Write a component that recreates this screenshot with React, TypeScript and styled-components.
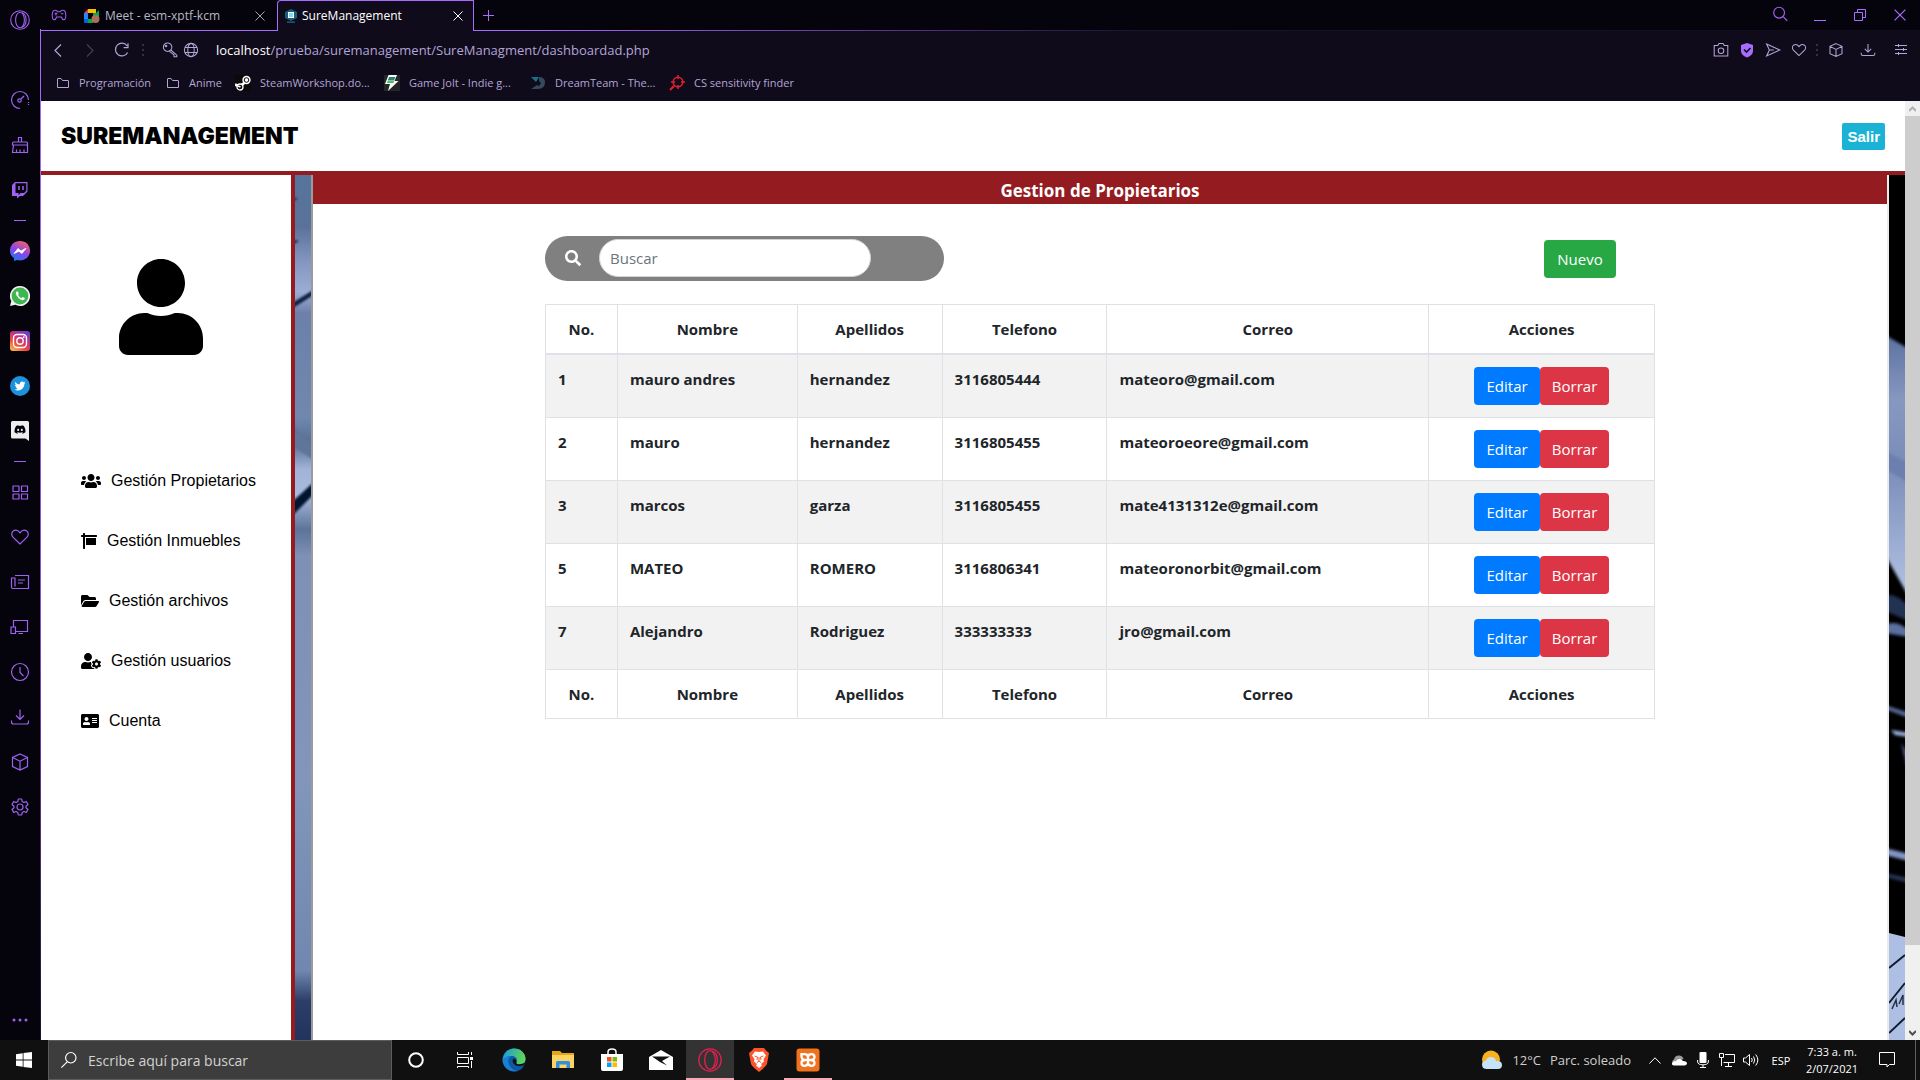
import React from "react";
import styled, { createGlobalStyle } from "styled-components";
import {
  FaUser,
  FaUsers,
  FaSign,
  FaFolderOpen,
  FaUserCog,
  FaAddressCard,
  FaSearch,
  FaTwitter,
  FaDiscord,
} from "react-icons/fa";

const uiFont = `"Open Sans", "Noto Sans", sans-serif`;
const arialFont = `"Liberation Sans", Arial, sans-serif`;
const red = "#941b1f";
const purple = "#9d63f0";
const lilac = "#b3a5d6";

const GlobalStyle = createGlobalStyle`
  *, *::before, *::after { box-sizing: border-box; }
  body { margin: 0; background: #05030c; font-family: ${uiFont}; }
  button, input { font-family: inherit; margin: 0; }
  svg { display: block; flex: none; }
`;

/* ---------- shared ---------- */

const Screen = styled.div`
  display: flex;
  flex-direction: column;
  height: 100vh;
  overflow: hidden;
`;

const IconButton = styled.button<{ $w?: number; $h?: number }>`
  display: flex;
  align-items: center;
  justify-content: center;
  flex: none;
  width: ${(p) => p.$w ?? 32}px;
  height: ${(p) => p.$h ?? 32}px;
  padding: 0;
  border: 0;
  background: none;
  color: inherit;
  font-size: 11px;
`;

type GlyphProps = { size?: number; w?: number; children: React.ReactNode };
const Glyph = ({ size = 20, w = 1.2, children }: GlyphProps) => (
  <svg width={size} height={size} viewBox="0 0 20 20" fill="none" stroke="currentColor" strokeWidth={w} aria-hidden="true">
    {children}
  </svg>
);

const HeartGlyph = () => (
  <path d="M10 17 L3 10.2 C1.2 8.3 1.4 5.4 3.2 4 C5.2 2.6 8 3 10 5.8 C12 3 14.8 2.6 16.8 4 C18.6 5.4 18.8 8.3 17 10.2 Z" />
);
const CubeGlyph = () => <path d="M10 2 L17.5 5.5 V14.5 L10 18 L2.5 14.5 V5.5 Z M2.5 5.5 L10 9.2 L17.5 5.5 M10 9.2 V18" />;
const DownloadGlyph = () => <path d="M10 2.5 V12 M6 8.5 L10 12.5 L14 8.5 M1.5 13.5 V15 Q1.5 17 3.5 17 H16.5 Q18.5 17 18.5 15 V13.5" />;

/* ---------- browser ---------- */

const Browser = styled.div`
  display: flex;
  flex: 1;
  min-height: 0;
`;

const OperaRail = styled.nav`
  display: flex;
  flex-direction: column;
  align-items: center;
  flex: none;
  width: 41px;
  color: ${purple};
  background: #05030c;
  border-right: 1px solid transparent;
  border-image: linear-gradient(#05030c 30px, #a86cff 30px, #8450cf 60%, #1b1230) 1;
`;

const RailGroup = styled.div<{ $top?: boolean }>`
  display: flex;
  flex-direction: column;
  margin-top: ${(p) => (p.$top ? 37 : 0)}px;
`;

const RailRule = styled.hr`
  width: 12px;
  height: 1px;
  margin: 8px 0 7px;
  border: 0;
  background: ${purple};
`;

const RailEnd = styled.div`
  margin-top: auto;
`;

const BrowserMain = styled.div`
  display: flex;
  flex-direction: column;
  flex: 1;
  min-width: 0;
`;

const TabStrip = styled.div`
  display: flex;
  align-items: stretch;
  height: 31px;
  background: linear-gradient(90deg, #a86cff 480px, #1b1230 1100px, #0f0b1a) bottom / 100% 1px no-repeat, #05030c;
  color: ${purple};
`;

const Tab = styled.div<{ $active?: boolean }>`
  display: flex;
  align-items: center;
  width: ${(p) => (p.$active ? 197 : 200)}px;
  padding-left: 7px;
  ${(p) =>
    p.$active &&
    `border: 1px solid #a86cff; border-bottom: 0; border-radius: 4px 0 0 0; background: #0f0b1a;`}
`;

const TabLabel = styled.button<{ $active?: boolean }>`
  display: flex;
  align-items: center;
  gap: 5px;
  flex: 1;
  padding: 0;
  border: 0;
  background: none;
  font-size: 12px;
  line-height: 16px;
  white-space: nowrap;
  color: ${(p) => (p.$active ? "#ffffff" : "#b9b6c4")};
`;

const WindowButtons = styled.div`
  display: flex;
  gap: 8px;
  margin-left: auto;
  margin-right: 4px;
`;

const AddressBar = styled.div`
  display: flex;
  align-items: center;
  height: 38px;
  padding: 0 4px 0 1px;
  background: #0f0b1a;
  color: ${lilac};
`;

const Dots = styled.span`
  width: 2px;
  height: 12px;
  margin: 0 4px;
  background: repeating-linear-gradient(#352f48 0 2px, transparent 2px 5px);
`;

const SiteButtons = styled.div`
  display: flex;
  padding-left: 11px;
`;

const Url = styled.div`
  flex: 1;
  padding-left: 15px;
  font-size: 13px;
  line-height: 20px;
  white-space: nowrap;
  color: ${lilac};
  b {
    font-weight: 400;
    color: #ffffff;
  }
`;

const Bookmarks = styled.nav`
  display: flex;
  align-items: center;
  gap: 12px;
  height: 32px;
  padding: 0 0 5px 15px;
  background: #0f0b1a;
`;

const Bookmark = styled.a<{ $w: number }>`
  display: flex;
  align-items: center;
  gap: 9px;
  width: ${(p) => p.$w}px;
  font-size: 11px;
  line-height: 16px;
  white-space: nowrap;
  text-decoration: none;
  color: ${lilac};
`;

const Dim = styled.span`
  color: #453d5c;
`;

/* ---------- page ---------- */

const Viewport = styled.div`
  display: flex;
  flex: 1;
  min-height: 0;
`;

const Page = styled.div`
  display: flex;
  flex-direction: column;
  flex: 1;
  min-width: 0;
  background: #ffffff;
`;

const PageHeader = styled.header`
  display: flex;
  align-items: center;
  justify-content: space-between;
  height: 74px;
  padding: 0 20px;
  border-bottom: 4px solid ${red};
`;

const Brand = styled.h1`
  margin: 0;
  font: 900 23px/28px Inter, ${arialFont};
  color: #000000;
`;

const Exit = styled.button`
  height: 27px;
  padding: 0 5px;
  border: 0;
  border-radius: 2px;
  background: #1ab3d6;
  color: #ffffff;
  font: 700 15px/27px ${arialFont};
`;

const PageBody = styled.div`
  display: grid;
  grid-template-columns: 254px 16px minmax(0, 1fr) 16px;
  flex: 1;
  min-height: 0;
`;

const Side = styled.aside`
  display: flex;
  flex-direction: column;
  align-items: center;
  padding: 84px 10px 0 0;
  border-right: 4px solid ${red};
  color: #000000;
  overflow: hidden;
`;

const SideNav = styled.nav`
  align-self: stretch;
  display: flex;
  flex-direction: column;
  margin-top: 96px;
  padding-left: 40px;
`;

const SideLink = styled.a`
  display: flex;
  align-items: center;
  gap: 10px;
  height: 60px;
  font: 16px/24px ${arialFont};
  color: #000000;
  text-decoration: none;
  white-space: nowrap;
`;

const Photo = styled.div`
  min-height: 0;
  overflow: hidden;
  svg {
    width: 100%;
    height: 100%;
  }
`;

const Content = styled.main`
  border-left: 2px solid #9b9b9b;
  border-right: 2px solid #ebebeb;
  background: #ffffff;
  color: #212529;
  overflow: hidden;
`;

const Title = styled.h2`
  margin: 0;
  height: 29px;
  background: ${red};
  color: #ffffff;
  font-size: 17px;
  line-height: 31px;
  font-weight: 700;
  text-align: center;
`;

const Container = styled.div`
  max-width: 1110px;
  margin: 32px auto 0;
`;

const Tools = styled.div`
  display: flex;
  justify-content: space-between;
  align-items: center;
  padding-right: 39px;
  margin-bottom: 23px;
`;

const SearchPill = styled.label`
  display: flex;
  align-items: center;
  gap: 18px;
  width: 399px;
  height: 45px;
  padding: 0 0 1px 20px;
  border-radius: 23px;
  background: #808080;
  color: #ffffff;
`;

const SearchInput = styled.input`
  width: 272px;
  height: 38px;
  padding: 0 10px;
  border: 1px solid #ced4da;
  border-radius: 19px;
  background: #ffffff;
  font-size: 15px;
  &::placeholder {
    color: #6c757d;
    opacity: 1;
  }
`;

const Action = styled.button<{ $bg: string; $w: number }>`
  width: ${(p) => p.$w}px;
  height: 38px;
  padding: 0;
  border: 0;
  border-radius: 4px;
  background: ${(p) => p.$bg};
  color: #ffffff;
  font-size: 15px;
  line-height: 24px;
`;

const Table = styled.table`
  width: 100%;
  table-layout: fixed;
  border-collapse: collapse;
  font-size: 15px;
  line-height: 24px;
  th,
  td {
    padding: 12px;
    border: 1px solid #dee2e6;
    font-weight: 700;
    text-align: left;
    vertical-align: top;
  }
  thead th,
  tfoot th,
  td:last-child {
    text-align: center;
  }
  thead th {
    border-bottom-width: 2px;
  }
  tbody tr:nth-child(odd) {
    background: #f2f2f2;
  }
`;

const Pair = styled.div`
  display: flex;
  justify-content: center;
`;

const ScrollTrack = styled.div`
  display: flex;
  flex-direction: column;
  flex: none;
  width: 15px;
  background: #f0f0f0;
  color: #505050;
`;

const ScrollThumb = styled.div`
  flex: 829;
  background: #cdcdcd;
`;

const ScrollRest = styled.div`
  flex: 80;
`;

/* ---------- taskbar ---------- */

const Taskbar = styled.footer`
  display: flex;
  align-items: stretch;
  flex: none;
  height: 40px;
  background: #101010;
  color: #ffffff;
`;

const TaskSearch = styled.label`
  display: flex;
  align-items: center;
  gap: 10px;
  width: 344px;
  padding-left: 11px;
  border: 1px solid #5c5c5c;
  background: #3d3d3d;
  input {
    flex: 1;
    min-width: 0;
    padding: 0;
    border: 0;
    background: none;
    font-size: 14px;
    color: #d2d2d2;
  }
  input::placeholder {
    color: #d2d2d2;
    opacity: 1;
  }
`;

const TaskApps = styled.div`
  display: flex;
  gap: 1px;
`;

const TaskApp = styled.button<{ $active?: boolean; $open?: boolean }>`
  display: flex;
  align-items: center;
  justify-content: center;
  width: 48px;
  padding: 0;
  border: 0;
  background: ${(p) => (p.$active ? "#333333" : "none")};
  color: #ffffff;
  box-shadow: ${(p) => (p.$active || p.$open ? "inset 0 -2px #f7a8b8" : "none")};
`;

const Tray = styled.div`
  display: flex;
  align-items: center;
  margin-left: auto;
  padding-right: 4px;
  font-size: 11px;
  line-height: 17px;
  white-space: nowrap;
`;

const Weather = styled.div`
  display: flex;
  align-items: center;
  gap: 9px;
  margin-right: 12px;
  font-size: 13px;
  color: #cfcfcf;
`;

const Clock = styled.time`
  width: 64px;
  margin-left: 1px;
  text-align: center;
`;

const DesktopEdge = styled.div`
  width: 1px;
  height: 40px;
  margin-left: 5px;
  background: #5f5f5f;
`;

/* ---------- drawings ---------- */

const OperaMark = ({ color, size }: { color: string; size: number }) => (
  <svg width={size} height={size} viewBox="0 0 20 20" fill="none" stroke={color} strokeWidth="1.1" aria-hidden="true">
    <circle cx="10" cy="10" r="9.3" />
    <ellipse cx="10" cy="10" rx="4.4" ry="7.8" />
    <path d="M12 2.6 C17.5 5 17.5 15 12 17.4" />
  </svg>
);

const LeftPhoto = () => (
  <svg viewBox="0 0 16 865" preserveAspectRatio="none" aria-hidden="true">
    <defs>
      <linearGradient id="lp" x1="0" y1="0" x2="0" y2="1">
        <stop offset="0" stopColor="#56749c" />
        <stop offset=".06" stopColor="#5a7299" />
        <stop offset=".1" stopColor="#8496bf" />
        <stop offset=".135" stopColor="#9aadd3" />
        <stop offset=".16" stopColor="#6c80aa" />
        <stop offset=".28" stopColor="#7088ad" />
        <stop offset=".31" stopColor="#566f98" />
        <stop offset=".34" stopColor="#a3b3d8" />
        <stop offset=".37" stopColor="#a9bbe0" />
        <stop offset=".41" stopColor="#5d7399" />
        <stop offset=".44" stopColor="#7d90b5" />
        <stop offset=".7" stopColor="#8196ba" />
        <stop offset=".92" stopColor="#7287af" />
        <stop offset=".955" stopColor="#2a3e68" />
        <stop offset="1" stopColor="#20345c" />
      </linearGradient>
      <filter id="lb" x="-50%" y="-50%" width="200%" height="200%">
        <feGaussianBlur stdDeviation="1.3" />
      </filter>
    </defs>
    <rect width="16" height="865" fill="url(#lp)" />
    <g filter="url(#lb)">
      <path d="M-4 129 L20 114 V119 L-4 134Z" fill="#071a3b" />
      <path d="M-4 250 L20 270 V286 L-4 270Z" fill="#5e7499" />
      <path d="M-4 328 L20 306 V318 L-4 342Z" fill="#06142f" />
      <path d="M-2 65 L4 66 L-2 69Z M-2 23 L3 23 L-2 26Z" fill="#071a3b" />
    </g>
  </svg>
);

const RightPhoto = () => (
  <svg viewBox="0 0 16 865" preserveAspectRatio="none" aria-hidden="true">
    <defs>
      <linearGradient id="rp" x1="0" y1="0" x2="0" y2="1">
        <stop offset="0" stopColor="#5b719f" />
        <stop offset=".25" stopColor="#8798c0" />
        <stop offset=".5" stopColor="#7a8cb7" />
        <stop offset="1" stopColor="#b3c3e6" />
      </linearGradient>
      <filter id="rb" x="-50%" y="-10%" width="200%" height="120%">
        <feGaussianBlur stdDeviation="1.6" />
      </filter>
    </defs>
    <rect width="16" height="865" fill="#000000" />
    <g filter="url(#rb)">
      <path d="M-4 160 L20 174 V422 L-4 380Z" fill="url(#rp)" />
      <path d="M-4 276 L20 288 V308 L-4 294Z" fill="#6c7fae" />
      <path d="M-4 420 Q8 418 20 432 V446 L-4 436Z" fill="#233253" />
      <path d="M-4 450 Q8 444 20 456 V462 L-4 458Z" fill="#5c6fa0" />
      <path d="M-4 530 L20 538 V543 L-4 534Z" fill="#566b9b" />
      <path d="M2 555 L20 558 V562 L6 560Z" fill="#9db3e2" />
      <path d="M12 568 L20 580 V600 Z" fill="#4a5c88" />
      <path d="M-4 673 L20 679 V686 L-4 680Z" fill="#8395c6" />
      <path d="M-4 698 L20 703 V708 L-4 702Z" fill="#263554" />
    </g>
    <path d="M0 758 L16 762 V865 H0Z" fill="#aebfe4" />
    <path d="M0 793 L16 780 M0 828 L16 808 M0 858 L16 843" stroke="#101a30" strokeWidth="2" />
    <path d="M3 834 L7 825 L8 832 M10 829 L14 820 V830" stroke="#26314b" strokeWidth="1.5" fill="none" />
  </svg>
);

const MeetIcon = () => (
  <svg width="16" height="14" viewBox="0 0 16 14" aria-hidden="true">
    <path d="M0 4 L4 0 V4Z" fill="#ea4335" />
    <path d="M4 0 H12 V4 H4Z" fill="#fbbc04" />
    <path d="M0 4 H4 V10 H0Z" fill="#2684fc" />
    <path d="M0 10 H4 V14 H1 Q0 14 0 13Z" fill="#0066da" />
    <path d="M4 10 H9 V14 H4Z M9 4 H12 L15 1 V9 H9Z" fill="#00ac47" />
    <circle cx="11.5" cy="10" r="4" fill="#a9705a" />
  </svg>
);

const SureIcon = () => (
  <svg width="12" height="14" viewBox="0 0 12 14" aria-hidden="true">
    <path d="M6 0 L12 3 V9 L6 12 L0 9 V3Z" fill="#1c5b78" />
    <rect x="3.5" y="3.5" width="5" height="5" fill="#6fe3f5" stroke="#ffffff" />
    <path d="M2 13.2 H10" stroke="#1c5b78" strokeWidth="1.5" />
  </svg>
);

const FolderIcon = () => (
  <svg width="14" height="12" viewBox="0 0 14 12" fill="none" stroke={lilac} aria-hidden="true">
    <path d="M1.5 10.5 V2 Q1.5 1.5 2 1.5 H5 L6.5 3.5 H12 Q12.5 3.5 12.5 4 V10.5Z" />
  </svg>
);

const SteamIcon = () => (
  <svg width="16" height="16" viewBox="0 0 16 16" aria-hidden="true">
    <rect width="16" height="16" fill="#0a0a0a" />
    <path d="M0 9.5 L5 11.5 L11.500 6" fill="none" stroke="#ffffff" strokeWidth="2.800" />
    <circle cx="11.500" cy="5" r="4.200" fill="#ffffff" />
    <circle cx="11.500" cy="5" r="2.300" fill="#ffffff" stroke="#0a0a0a" strokeWidth="1" />
    <circle cx="5" cy="12" r="3" fill="#0a0a0a" stroke="#ffffff" strokeWidth="1.300" />
    <path d="M3 11 L5.500 12" stroke="#ffffff" strokeWidth="1.800" />
  </svg>
);

const JoltIcon = () => (
  <svg width="16" height="16" viewBox="0 0 16 16" aria-hidden="true">
    <rect width="16" height="16" fill="#262626" />
    <path d="M4.500 0 H13 L10.500 6 H14.500 L4 16 L6 9 H1Z" fill="#ffffff" />
    <path d="M5 2 H11.500 L10 5.500 H3.800Z" fill="#2f7f6f" />
    <path d="M3.500 6 H10 L9.500 8 H2.800Z" fill="#45c85a" />
  </svg>
);

const DreamIcon = () => (
  <svg width="16" height="16" viewBox="0 0 16 16" aria-hidden="true">
    <path d="M1 2 H9 L6 7Z" fill="#17718c" />
    <path d="M9 2 Q15 2 15 7.500 Q15 14 8 14 H1 L7 10 L9 11 L11 8 L9 6Z" fill="#34495c" />
  </svg>
);

const AimIcon = () => (
  <svg width="16" height="16" viewBox="0 0 16 16" fill="none" stroke="#e0202e" strokeWidth="1.500" aria-hidden="true">
    <circle cx="9" cy="7" r="4.800" />
    <path d="M9 0 V4 M9 10 V14 M2 7 H6 M12 7 H16" />
    <path d="M5 11 L1 15" strokeWidth="2.200" />
  </svg>
);

const ShieldIcon = () => (
  <svg width="14" height="16" viewBox="0 0 14 16" aria-hidden="true">
    <path d="M7 1 L13 3 V9 Q13 13 7 15.500 Q1 13 1 9 V3Z" fill="#a86cff" />
    <path d="M4 7.500 L6.500 10 L10.500 6" fill="none" stroke="#0f0b1a" strokeWidth="1.600" />
  </svg>
);

const TwitchIcon = () => (
  <svg width="18" height="18" viewBox="0 0 18 18" aria-hidden="true">
    <path d="M1 4 L4 1 H16.500 V10.500 L12 15 H9 L6 17.500 V15 H1Z" fill={purple} />
    <path d="M4.500 2.200 H15.300 V9.800 L13 12 H9.600 L7.500 14 V12 H4.500Z" fill="#05030c" />
    <path d="M8 5 V9 M12 5 V9" stroke={purple} strokeWidth="1.500" />
  </svg>
);

const MessengerIcon = () => (
  <svg width="20" height="20" viewBox="0 0 20 20" aria-hidden="true">
    <defs>
      <linearGradient id="ms" x1=".2" y1="1" x2=".7" y2="0">
        <stop offset="0" stopColor="#1a7cf0" />
        <stop offset=".5" stopColor="#8a44e8" />
        <stop offset="1" stopColor="#f2636b" />
      </linearGradient>
    </defs>
    <path d="M10 0 C16 0 20 4.200 20 9.700 S16 19.400 10 19.400 L7 19 L4 20 V17 C1.300 15.300 0 12.700 0 9.700 C0 4.200 4 0 10 0Z" fill="url(#ms)" />
    <path d="M4 12.500 L8 7.500 L11 10 L16 7.300 L12 12.500 L9 10.300Z" fill="#ffffff" stroke="#ffffff" strokeWidth=".8" strokeLinejoin="round" />
  </svg>
);

const WhatsIcon = () => (
  <svg width="20" height="20" viewBox="0 0 20 20" aria-hidden="true">
    <path d="M10 0 A10 10 0 1 1 5.300 18.800 L0 20 L1.300 15 A10 10 0 0 1 10 0Z" fill="#f2f2f2" />
    <circle cx="10" cy="10" r="8.400" fill="#3fb650" />
    <path d="M6.500 5.500 Q5 7 6.500 9.500 Q9 13.500 12.500 14.300 Q14.800 14 15 12.300 L12.600 11 L11.500 12.200 Q9 11.200 8 8.800 L8.800 7.700 L7.900 5.500Z" fill="#ffffff" />
  </svg>
);

const InstaIcon = () => (
  <svg width="20" height="20" viewBox="0 0 20 20" aria-hidden="true">
    <defs>
      <linearGradient id="ig" x1=".1" y1="1" x2=".8" y2="0">
        <stop offset="0" stopColor="#fdc04f" />
        <stop offset=".35" stopColor="#ee4a3c" />
        <stop offset=".65" stopColor="#c32f8c" />
        <stop offset="1" stopColor="#6a3fc8" />
      </linearGradient>
    </defs>
    <rect width="20" height="20" rx="3" fill="url(#ig)" />
    <rect x="3.500" y="3.500" width="13" height="13" rx="3.500" fill="none" stroke="#ffffff" strokeWidth="1.400" />
    <circle cx="10" cy="10" r="3.200" fill="none" stroke="#ffffff" strokeWidth="1.400" />
    <circle cx="13.800" cy="6.200" r=".9" fill="#ffffff" />
  </svg>
);

const TwitterIcon = () => (
  <svg width="20" height="20" viewBox="0 0 20 20" aria-hidden="true">
    <circle cx="10" cy="10" r="10" fill="#1c92dd" />
    <FaTwitter x="4.500" y="4.500" size="11" color="#ffffff" />
  </svg>
);

const DiscordIcon = () => (
  <svg width="20" height="20" viewBox="0 0 20 20" aria-hidden="true">
    <path d="M2.500 0 H17.500 Q19 0 19 1.500 V20 L15.500 17.500 H2.500 Q1 17.500 1 16 V1.500 Q1 0 2.500 0Z" fill="#ededed" />
    <FaDiscord x="4" y="2.500" size="12" color="#05030c" />
  </svg>
);

const EdgeIcon = () => (
  <svg width="24" height="24" viewBox="0 0 24 24" aria-hidden="true">
    <defs>
      <linearGradient id="eg" x1="0" y1=".3" x2="1" y2=".5">
        <stop offset="0" stopColor="#1d9ae0" />
        <stop offset="1" stopColor="#62d84e" />
      </linearGradient>
    </defs>
    <circle cx="12" cy="12" r="11.500" fill="#0c59a4" />
    <path d="M.8 10.500 C2 4 7 .5 12.500 .5 C19 .5 23.500 5.500 23.500 10.500 C23.500 14.500 20.500 16.500 17.500 16.500 C15 16.500 13.500 15.500 14.500 14 C16 11 13.500 8 9.500 8 C5.500 8 2 10 .8 13Z" fill="url(#eg)" />
    <path d="M9.500 8 C6 9.500 5.500 13.500 7.500 17.500 C9 20.500 12 22.500 15 23 C8 24.500 1 19.500 .6 12.500 C2 9.500 5.500 7.500 9.500 8Z" fill="#1b7fd3" />
    <path d="M12 10.500 Q9.500 12 11.500 15.500 Q14.500 19.500 22 17.300 L23 15 L18 16.300 Q13.500 16.500 14.500 14 Q15 12 12 10.500Z" fill="#101010" />
  </svg>
);

const ExplorerIcon = () => (
  <svg width="22" height="20" viewBox="0 0 22 20" aria-hidden="true">
    <path d="M0 1 H8 L10 3 H22 V18 H0Z" fill="#e5a51d" />
    <path d="M0 5 H22 V18 H0Z" fill="#fcd462" />
    <path d="M4 18 V12.500 Q4 11 5.500 11 H16.500 Q18 11 18 12.500 V18 H14.500 V14.500 H7.500 V18Z" fill="#3390df" />
  </svg>
);

const StoreIcon = () => (
  <svg width="24" height="24" viewBox="0 0 24 24" aria-hidden="true">
    <path d="M8 7 V4 Q8 1 12 1 Q16 1 16 4 V7" fill="none" stroke="#ffffff" strokeWidth="1.500" />
    <path d="M1 6 H23 V21 Q23 23 21 23 H3 Q1 23 1 21Z" fill="#ffffff" />
    <path d="M7 9 H11.500 V13.500 H7Z" fill="#f25022" />
    <path d="M12.500 9 H17 V13.500 H12.500Z" fill="#7fba00" />
    <path d="M7 14.500 H11.500 V19 H7Z" fill="#00a4ef" />
    <path d="M12.500 14.500 H17 V19 H12.500Z" fill="#ffb900" />
  </svg>
);

const MailIcon = () => (
  <svg width="24" height="20" viewBox="0 0 24 20" aria-hidden="true">
    <path d="M0 7 L12 0 L24 7 V20 H0Z" fill="#ffffff" />
    <path d="M3 6.500 H21 L13 11 L18 15.500 L11 12Z" fill="#101010" />
  </svg>
);

const XamppIcon = () => (
  <svg width="24" height="24" viewBox="0 0 24 24" aria-hidden="true">
    <rect x=".5" y=".5" width="23" height="23" rx="3" fill="#f2711c" />
    <path
      d="M5.500 6 V8 Q5.500 12 9.500 12 H14.500 Q18.500 12 18.500 9 Q18.500 6.200 15.500 6.200 Q12 6.200 12 9.500 V14.500 Q12 17.800 8.500 17.800 Q5.500 17.800 5.500 15 Q5.500 12 9.500 12 M14.500 12 Q18.500 12 18.500 15 Q18.500 17.800 15.500 17.800 Q12 17.800 12 14.500 M12 9.500 Q12 6.200 8.500 6.200 H4.300"
      fill="none"
      stroke="#ffffff"
      strokeWidth="2.300"
    />
  </svg>
);

const SunCloudIcon = () => (
  <svg width="22" height="20" viewBox="0 0 22 20" aria-hidden="true">
    <circle cx="10" cy="9.500" r="9" fill="#f8b21f" />
    <path d="M6 19 Q1 19 1 14.500 Q1 11 5 10.500 Q6.500 6.500 10.500 7 Q14.500 7.500 15 11 Q21 10.500 21 15 Q21 19 17 19Z" fill="#c4e3f8" />
  </svg>
);

/* ---------- data ---------- */

const columns = [
  { name: "No.", width: 72 },
  { name: "Nombre", width: 180 },
  { name: "Apellidos", width: 145 },
  { name: "Telefono", width: 165 },
  { name: "Correo", width: 322 },
  { name: "Acciones", width: 226 },
];

const owners = [
  ["1", "mauro andres", "hernandez", "3116805444", "mateoro@gmail.com"],
  ["2", "mauro", "hernandez", "3116805455", "mateoroeore@gmail.com"],
  ["3", "marcos", "garza", "3116805455", "mate4131312e@gmail.com"],
  ["5", "MATEO", "ROMERO", "3116806341", "mateoronorbit@gmail.com"],
  ["7", "Alejandro", "Rodriguez", "333333333", "jro@gmail.com"],
];

const menu = [
  { label: "Gestión Propietarios", icon: <FaUsers size={20} />, w: 20 },
  { label: "Gestión Inmuebles", icon: <FaSign size={16} />, w: 16 },
  { label: "Gestión archivos", icon: <FaFolderOpen size={18} />, w: 18 },
  { label: "Gestión usuarios", icon: <FaUserCog size={20} />, w: 20 },
  { label: "Cuenta", icon: <FaAddressCard size={18} />, w: 18 },
];

const bookmarks = [
  { label: "Programación", icon: <FolderIcon />, w: 98 },
  { label: "Anime", icon: <FolderIcon />, w: 57 },
  { label: "SteamWorkshop.do...", icon: <SteamIcon />, w: 137 },
  { label: "Game Jolt - Indie g...", icon: <JoltIcon />, w: 134 },
  { label: "DreamTeam - The...", icon: <DreamIcon />, w: 127 },
  { label: "CS sensitivity finder", icon: <AimIcon />, w: 130 },
];

const railTop = [
  { label: "GX Control", icon: <Glyph><path d="M10 18.500 A8.500 8.500 0 1 1 18.500 10" /><path d="M18.500 12 V16" strokeDasharray="1 1" /><circle cx="9.500" cy="10.500" r="1.700" /><path d="M11 9 L14 6" /></Glyph> },
  { label: "GX Cleaner", icon: <Glyph><path d="M8.500 7 V2.500 H11.500 V7 M3.500 7 H16.500 Q17.500 7 17.500 8 V10 H2.500 V8 Q2.500 7 3.500 7Z M3.500 10 L2.500 17.500 H17.500 V10 M6.500 17 V14.500 M10 17 V14.500 M14 17 V14.500" /></Glyph> },
  { label: "Twitch", icon: <TwitchIcon /> },
];

const railApps = [
  { label: "Messenger", icon: <MessengerIcon /> },
  { label: "WhatsApp", icon: <WhatsIcon /> },
  { label: "Instagram", icon: <InstaIcon /> },
  { label: "Twitter", icon: <TwitterIcon /> },
  { label: "Discord", icon: <DiscordIcon /> },
];

const railTools = [
  { label: "Speed Dial", icon: <Glyph><path d="M3 4 H9 V9.500 H3Z M11.500 4 H17.500 V9.500 H11.500Z M3 12 H9 V17 H3Z M11.500 12 H17.500 V17 H11.500Z" strokeLinejoin="round" /></Glyph> },
  { label: "Favoritos", icon: <Glyph><HeartGlyph /></Glyph> },
  { label: "Noticias", icon: <Glyph><path d="M5 3.500 H18.500 V16.500 H3 Q1.500 16.500 1.500 15 V6 H5 V14.500 M8 8 H15 M8 11 H13" /></Glyph> },
  { label: "Mi Flow", icon: <Glyph><path d="M3.500 9.500 V3.500 H17.500 V14.500 H6 M1 10 H5.500 V16.500 H1Z M8.500 16.500 H13" /></Glyph> },
  { label: "Historial", icon: <Glyph><circle cx="10" cy="10" r="8.500" /><path d="M10 5 V10.500 L13.500 14" /></Glyph> },
  { label: "Descargas", icon: <Glyph><DownloadGlyph /></Glyph> },
  { label: "Extensiones", icon: <Glyph><CubeGlyph /></Glyph> },
  { label: "Configuración", icon: <Glyph><circle cx="10" cy="10" r="3" /><path d="M8.300 2 H11.700 L12.200 4.600 L13.800 5.500 L16.300 4.600 L18 7.500 L16 9.200 V10.800 L18 12.500 L16.300 15.400 L13.800 14.500 L12.200 15.400 L11.700 18 H8.300 L7.800 15.400 L6.200 14.500 L3.700 15.400 L2 12.500 L4 10.800 V9.200 L2 7.500 L3.700 4.600 L6.200 5.500 L7.800 4.600Z" strokeLinejoin="round" /></Glyph> },
];

const RailItems = ({ items }: { items: { label: string; icon: React.ReactNode }[] }) => (
  <>
    {items.map((item) => (
      <IconButton key={item.label} $w={40} $h={45} aria-label={item.label}>
        {item.icon}
      </IconButton>
    ))}
  </>
);

const IconSlot = styled.span<{ $w: number }>`
  display: flex;
  justify-content: center;
  width: ${(p) => p.$w}px;
`;

const CloseIcon = ({ color, size }: { color: string; size: number }) => (
  <svg width={size} height={size} viewBox="0 0 10 10" stroke={color} aria-hidden="true">
    <path d="M.5 .5 L9.500 9.500 M9.500 .5 L.5 9.500" />
  </svg>
);

export default function App() {
  return (
    <Screen>
      <GlobalStyle />
      <Browser>
        <OperaRail>
          <IconButton $w={40} $h={40} aria-label="Opera">
            <OperaMark color={purple} size={20} />
          </IconButton>
          <RailGroup $top>
            <RailItems items={railTop} />
          </RailGroup>
          <RailRule />
          <RailGroup>
            <RailItems items={railApps} />
          </RailGroup>
          <RailRule />
          <RailGroup>
            <RailItems items={railTools} />
          </RailGroup>
          <RailEnd>
            <IconButton $w={40} $h={40} aria-label="Más">
              <svg width="16" height="4" viewBox="0 0 16 4" fill={purple}>
                <circle cx="2" cy="2" r="1.500" />
                <circle cx="8" cy="2" r="1.500" />
                <circle cx="14" cy="2" r="1.500" />
              </svg>
            </IconButton>
          </RailEnd>
        </OperaRail>

        <BrowserMain>
          <TabStrip>
            <IconButton $w={36} $h={30} aria-label="GX Corner">
              <Glyph size={16} w={1.3}>
                <path d="M5.500 4 Q8 4 8 6 H12 Q12 4 14.500 4 Q18.500 4 18.500 10 Q18.500 16 16 16 Q14 16 13 12.500 H7 Q6 16 4 16 Q1.500 16 1.500 10 Q1.500 4 5.500 4Z" />
                <path d="M4.500 8.500 H8 M6.200 7 V10.500 M12.500 8.500 H15.500" />
              </Glyph>
            </IconButton>
            <Tab>
              <TabLabel>
                <MeetIcon /> Meet - esm-xptf-kcm
              </TabLabel>
              <IconButton $w={34} $h={24} aria-label="Cerrar Meet">
                <CloseIcon color="#a9a6b5" size={10} />
              </IconButton>
            </Tab>
            <Tab $active>
              <TabLabel $active>
                <SureIcon /> SureManagement
              </TabLabel>
              <IconButton $w={30} $h={24} aria-label="Cerrar SureManagement">
                <CloseIcon color="#ffffff" size={10} />
              </IconButton>
            </Tab>
            <IconButton $w={28} $h={30} aria-label="Nueva pestaña">
              <svg width="11" height="11" viewBox="0 0 11 11" stroke="#a86cff"><path d="M5.500 0 V11 M0 5.500 H11" /></svg>
            </IconButton>
            <WindowButtons>
              <IconButton $h={28} aria-label="Buscar pestañas">
                <Glyph size={18} w={1.3}><circle cx="9" cy="8.500" r="6" /><path d="M13.500 13 L18 17.500" /></Glyph>
              </IconButton>
              <IconButton $h={30} aria-label="Minimizar">
                <svg width="12" height="12" viewBox="0 0 12 12" stroke="#a86cff"><path d="M0 11.500 H12" /></svg>
              </IconButton>
              <IconButton $h={30} aria-label="Restaurar">
                <svg width="12" height="12" viewBox="0 0 12 12" fill="none" stroke="#a86cff"><path d="M.5 3.500 H8.500 V11.500 H.5Z M3.500 3.500 V.5 H11.500 V8.500 H8.500" /></svg>
              </IconButton>
              <IconButton $h={30} aria-label="Cerrar">
                <CloseIcon color="#a86cff" size={12} />
              </IconButton>
            </WindowButtons>
          </TabStrip>

          <AddressBar>
            <IconButton aria-label="Atrás"><svg width="8" height="13" viewBox="0 0 8 13" fill="none" stroke="currentColor" strokeWidth="1.2"><path d="M7 .5 L1 6.500 L7 12.500" /></svg></IconButton>
            <Dim>
              <IconButton aria-label="Adelante"><svg width="8" height="13" viewBox="0 0 8 13" fill="none" stroke="currentColor" strokeWidth="1.2"><path d="M1 .5 L7 6.500 L1 12.500" /></svg></IconButton>
            </Dim>
            <IconButton aria-label="Recargar"><Glyph size={16} w={1.5}><path d="M17 13 A8 8 0 1 1 16.500 5 M17.500 1.500 V7 H12" /></Glyph></IconButton>
            <Dots />
            <SiteButtons>
              <IconButton $w={21} aria-label="Contraseñas"><Glyph size={16} w={1.3}><circle cx="7" cy="6.500" r="5.300" /><circle cx="5" cy="5" r="1" /><path d="M11 10 L18.500 16.500 V18.500 H15 V16 L9 11.500" /></Glyph></IconButton>
              <IconButton $w={21} aria-label="Información del sitio"><Glyph size={16} w={1.3}><circle cx="10" cy="10" r="8.300" /><ellipse cx="10" cy="10" rx="4" ry="8.300" /><path d="M2.500 7 H17.500 M2.500 13 H17.500" /></Glyph></IconButton>
            </SiteButtons>
            <Url><b>localhost</b>/prueba/suremanagement/SureManagment/dashboardad.php</Url>
            <IconButton $w={26} aria-label="Captura"><Glyph size={16} w={1.3}><path d="M1.500 4.500 H6 L7.500 2 H12.500 L14 4.500 H18.500 V17.500 H1.500Z" /><circle cx="10" cy="11" r="3.500" /></Glyph></IconButton>
            <IconButton $w={26} aria-label="Bloqueador"><ShieldIcon /></IconButton>
            <IconButton $w={26} aria-label="Enviar"><Glyph size={16} w={1.3}><path d="M2 2.500 L18.500 10 L2 17.500 L5.500 10Z M5.500 10 H11" /></Glyph></IconButton>
            <IconButton $w={26} aria-label="Marcar"><Glyph size={16} w={1.3}><HeartGlyph /></Glyph></IconButton>
            <Dots />
            <IconButton $w={28} aria-label="Extensiones"><Glyph size={16} w={1.3}><CubeGlyph /></Glyph></IconButton>
            <IconButton $w={36} aria-label="Descargas"><Glyph size={16} w={1.3}><DownloadGlyph /></Glyph></IconButton>
            <IconButton $w={30} aria-label="Ajustes rápidos"><svg width="12" height="12" viewBox="0 0 12 12" stroke="currentColor"><path d="M0 1.500 H12 M0 5.500 H12 M0 9.500 H12 M3.500 0 V3 M8.500 4 V7 M3.500 8 V11" /></svg></IconButton>
          </AddressBar>

          <Bookmarks>
            {bookmarks.map((b) => (
              <Bookmark key={b.label} href="#" $w={b.w}>
                {b.icon} {b.label}
              </Bookmark>
            ))}
          </Bookmarks>

          <Viewport>
            <Page>
              <PageHeader>
                <Brand>SUREMANAGEMENT</Brand>
                <Exit>Salir</Exit>
              </PageHeader>
              <PageBody>
                <Side>
                  <FaUser size={96} />
                  <SideNav>
                    {menu.map((m) => (
                      <SideLink key={m.label} href="#">
                        <IconSlot $w={m.w}>{m.icon}</IconSlot>
                        {m.label}
                      </SideLink>
                    ))}
                  </SideNav>
                </Side>
                <Photo><LeftPhoto /></Photo>
                <Content>
                  <Title>Gestion de Propietarios</Title>
                  <Container>
                    <Tools>
                      <SearchPill>
                        <FaSearch size={16} />
                        <SearchInput type="text" placeholder="Buscar" aria-label="Buscar" />
                      </SearchPill>
                      <Action $bg="#28a745" $w={72}>Nuevo</Action>
                    </Tools>
                    <Table>
                      <colgroup>
                        {columns.map((c) => (
                          <col key={c.name} style={{ width: `${(c.width / 1110) * 100}%` }} />
                        ))}
                      </colgroup>
                      <thead>
                        <tr>{columns.map((c) => <th key={c.name}>{c.name}</th>)}</tr>
                      </thead>
                      <tbody>
                        {owners.map((row) => (
                          <tr key={row[0]}>
                            {row.map((cell, i) => <td key={i}>{cell}</td>)}
                            <td>
                              <Pair>
                                <Action $bg="#007bff" $w={66}>Editar</Action>
                                <Action $bg="#dc3545" $w={69}>Borrar</Action>
                              </Pair>
                            </td>
                          </tr>
                        ))}
                      </tbody>
                      <tfoot>
                        <tr>{columns.map((c) => <th key={c.name}>{c.name}</th>)}</tr>
                      </tfoot>
                    </Table>
                  </Container>
                </Content>
                <Photo><RightPhoto /></Photo>
              </PageBody>
            </Page>
            <ScrollTrack>
              <IconButton $w={15} $h={15} aria-label="Subir"><svg width="7" height="6" viewBox="0 0 7 6" fill="none" stroke="#b0b0b0" strokeWidth="2"><path d="M0 5 L3.500 1.500 L7 5" /></svg></IconButton>
              <ScrollThumb />
              <ScrollRest />
              <IconButton $w={15} $h={15} aria-label="Bajar"><svg width="7" height="6" viewBox="0 0 7 6" fill="none" stroke="currentColor" strokeWidth="2"><path d="M0 1 L3.500 4.500 L7 1" /></svg></IconButton>
            </ScrollTrack>
          </Viewport>
        </BrowserMain>
      </Browser>

      <Taskbar>
        <IconButton $w={48} $h={40} aria-label="Inicio">
          <svg width="16" height="16" viewBox="0 0 16 16" fill="#ffffff"><path d="M0 2.200 L6.700 1.200 V7.600 H0Z M7.500 1.100 L16 0 V7.600 H7.500Z M0 8.400 H6.700 V14.800 L0 13.800Z M7.500 8.400 H16 V16 L7.500 14.900Z" /></svg>
        </IconButton>
        <TaskSearch>
          <Glyph size={18} w={1.3}><circle cx="12" cy="7.500" r="5.800" /><path d="M8 12 L1.500 18.500" /></Glyph>
          <input type="text" placeholder="Escribe aquí para buscar" aria-label="Escribe aquí para buscar" />
        </TaskSearch>
        <TaskApps>
          <TaskApp aria-label="Cortana"><svg width="16" height="16" viewBox="0 0 16 16" fill="none" stroke="#ffffff" strokeWidth="2"><circle cx="8" cy="8" r="6.800" /></svg></TaskApp>
          <TaskApp aria-label="Vista de tareas"><svg width="16" height="16" viewBox="0 0 16 16" fill="none" stroke="#ffffff"><path d="M.5 0 V2.500 H11.500 V0 M.5 5.500 H11.500 V11.500 H.5Z M.5 16 V14.500 H11.500 V16 M14.500 0 V3 M14.500 9 V16" /><path d="M13 5 H16 V8 H13Z" fill="#ffffff" stroke="none" /></svg></TaskApp>
          <TaskApp aria-label="Edge"><EdgeIcon /></TaskApp>
          <TaskApp aria-label="Explorador"><ExplorerIcon /></TaskApp>
          <TaskApp aria-label="Tienda"><StoreIcon /></TaskApp>
          <TaskApp aria-label="Correo"><MailIcon /></TaskApp>
          <TaskApp $active aria-label="Opera GX"><OperaMark color="#e0204f" size={24} /></TaskApp>
          <TaskApp aria-label="Brave">
            <svg width="20" height="24" viewBox="0 0 20 24"><path d="M5 0 H15 L17 2.500 L20 5 L18 16 Q17 18.500 10 24 Q3 18.500 2 16 L0 5 L3 2.500Z" fill="#fb542b" /><path d="M10 4 L14 3.500 L17 7.500 L14.500 11 L15 13.500 L12 16 L13 17.500 L10 20 L7 17.500 L8 16 L5 13.500 L5.500 11 L3 7.500 L6 3.500Z" fill="#ffffff" /><path d="M5.500 8 L8.500 9 L8 12 M14.500 8 L11.500 9 L12 12 M8 14.500 L10 13 L12 14.500 M10 9 V13" fill="none" stroke="#fb542b" /></svg>
          </TaskApp>
          <TaskApp $open aria-label="XAMPP"><XamppIcon /></TaskApp>
        </TaskApps>
        <Tray>
          <Weather>
            <SunCloudIcon />
            <span>12°C</span>
            <span>Parc. soleado</span>
          </Weather>
          <IconButton $w={24} $h={40} aria-label="Iconos ocultos"><svg width="12" height="7" viewBox="0 0 12 7" fill="none" stroke="#ffffff"><path d="M.5 6.500 L6 .8 L11.500 6.500" /></svg></IconButton>
          <IconButton $w={24} $h={40} aria-label="OneDrive"><svg width="16" height="11" viewBox="0 0 16 11"><path d="M2 9 Q0 6 3 4.500 Q4 0 8.500 .5 Q12 1 12.500 4 L6 6Z" fill="#9a9a9a" /><path d="M3 10.500 Q.5 10 1 8 Q2 6 5 6 Q7 3 10 4.300 L12 6 Q16 6 16 8.500 Q15.500 10.500 13.500 10.500Z" fill="#ffffff" /></svg></IconButton>
          <IconButton $w={24} $h={40} aria-label="Micrófono"><svg width="12" height="16" viewBox="0 0 12 16"><rect x="2.500" width="7" height="11" rx="1" fill="#ffffff" /><path d="M.6 8 V10 Q1 12.800 6 12.800 Q11 12.800 11.400 10 V8 M6 13 V15.500 M3 15.500 H9" fill="none" stroke="#ffffff" /></svg></IconButton>
          <IconButton $w={24} $h={40} aria-label="Red"><svg width="16" height="14" viewBox="0 0 16 14" fill="none" stroke="#ffffff"><path d="M6 1.500 H15.500 V9.500 H4.500 M9.500 9.500 V13 M6 13.500 H13 M.5 .5 H4.500 V4.500 H.5Z M2.500 4.500 V13" /></svg></IconButton>
          <IconButton $w={24} $h={40} aria-label="Volumen"><svg width="16" height="14" viewBox="0 0 16 14" fill="none" stroke="#ffffff"><path d="M.5 5 H2.500 L6.500 1.500 V12.500 L2.500 9 H.5Z M8.500 5 Q10 7 8.500 9 M10.500 3.500 Q13 7 10.500 10.500 M12.700 1.500 Q17 7 12.700 12.500" /></svg></IconButton>
          <IconButton $w={36} $h={40}>ESP</IconButton>
          <Clock>
            7:33 a. m.
            <br />
            2/07/2021
          </Clock>
          <IconButton $w={46} $h={40} aria-label="Notificaciones"><svg width="16" height="16" viewBox="0 0 16 16" fill="none" stroke="#ffffff"><path d="M.5 .5 H15.500 V12.500 H10.500 L8 15 V12.500 H.5Z" /></svg></IconButton>
          <DesktopEdge />
        </Tray>
      </Taskbar>
    </Screen>
  );
}
